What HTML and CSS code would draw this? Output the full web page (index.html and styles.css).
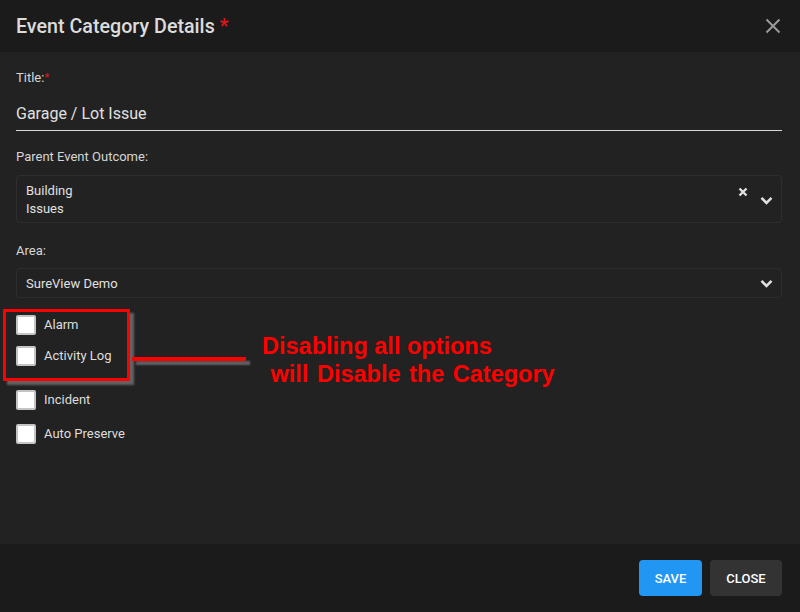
FILE: index.html
```html
<!DOCTYPE html>
<html lang="en">
<head>
  <meta charset="UTF-8" />
  <meta name="viewport" content="width=device-width, initial-scale=1.0" />
  <title>Event Category Details</title>
  <link rel="stylesheet" href="styles.css">
</head>
<body>
  <div class="dialog">
    <div class="dialog-header">
      <div class="dialog-title">Event Category Details <span class="req">*</span></div>
      <button class="btn-x" aria-label="Close">
        <svg width="16" height="16" viewBox="0 0 16 16"><path d="M1.5 1.5 L14.5 14.5 M14.5 1.5 L1.5 14.5" stroke="#9a9a9a" stroke-width="2" fill="none"/></svg>
      </button>
    </div>

    <div class="dialog-body">
      <label class="field-label">Title:<span class="req">*</span></label>
      <div class="text-input">Garage / Lot Issue</div>

      <label class="field-label label-gap">Parent Event Outcome:</label>
      <div class="select select-tall">
        <div class="select-value">Building<br>Issues</div>
        <span class="select-clear">
          <svg width="10" height="10" viewBox="0 0 10 10"><path d="M1.5 1.5 L8.5 8.5 M8.5 1.5 L1.5 8.5" stroke="#e0e0e0" stroke-width="2.4" fill="none"/></svg>
        </span>
        <span class="select-arrow">
          <svg width="13" height="9" viewBox="0 0 13 9"><path d="M1.5 1.8 L6.5 6.8 L11.5 1.8" stroke="#e0e0e0" stroke-width="2.6" fill="none"/></svg>
        </span>
      </div>

      <label class="field-label label-gap-lg">Area:</label>
      <div class="select">
        <div class="select-value">SureView Demo</div>
        <span class="select-arrow">
          <svg width="13" height="9" viewBox="0 0 13 9"><path d="M1.5 1.8 L6.5 6.8 L11.5 1.8" stroke="#e0e0e0" stroke-width="2.6" fill="none"/></svg>
        </span>
      </div>

      <div class="checks">
        <label class="check"><span class="box"></span>Alarm</label>
        <label class="check"><span class="box"></span>Activity Log</label>
        <label class="check check-incident"><span class="box"></span>Incident</label>
        <label class="check check-auto"><span class="box"></span>Auto Preserve</label>
      </div>
    </div>

    <div class="dialog-footer">
      <button class="btn btn-save">SAVE</button>
      <button class="btn btn-close">CLOSE</button>
    </div>

    <!-- annotation drawn over the screenshot -->
    <div class="note-box"></div>
    <div class="note-line"></div>
    <div class="note-text">Disabling all options
<span class="note-wide"> will Disable the Category</span></div>
  </div>
</body>
</html>
```

FILE: styles.css
```css
body {
  margin: 0;
  font-family: Roboto, "Liberation Sans", Arial, sans-serif;
  background: #1b1b1b;
  color: #dedede;
}
.dialog {
  position: relative;
  display: flex;
  flex-direction: column;
  width: 800px;
  height: 612px;
  overflow: hidden;
}
.dialog-header {
  height: 52px;
  flex: none;
  display: flex;
  align-items: center;
  justify-content: space-between;
  padding: 0 18px 0 16px;
  background: #1b1b1b;
}
.dialog-title {
  font-size: 19.7px;
  font-weight: 500;
  color: #dcdcdc;
}
.req {
  color: #e8141b;
}
.btn-x {
  background: none;
  border: none;
  padding: 0;
  margin-right: 1px;
  display: flex;
  cursor: pointer;
}
.dialog-body {
  flex: 1;
  display: flex;
  flex-direction: column;
  padding: 18px 18px 0 16px;
  background: #222222;
}
.field-label {
  display: block;
  font-size: 13px;
  line-height: 16px;
  color: #d6d6d6;
}
.field-label .req {
  font-size: 11px;
  vertical-align: top;
}
.text-input {
  margin-top: 18px;
  font-size: 16px;
  line-height: 20px;
  padding-bottom: 6px;
  border-bottom: 1px solid #d8d8d8;
  color: #e0e0e0;
}
.label-gap {
  margin-top: 18px;
}
.label-gap-lg {
  margin-top: 20px;
}
.select {
  margin-top: 9px;
  display: flex;
  align-items: center;
  height: 30px;
  box-sizing: border-box;
  padding: 1px 8px 0 9px;
  border: 1px solid #2e2e2e;
  border-radius: 4px;
}
.select-tall {
  margin-top: 10px;
  height: 48px;
  align-items: flex-start;
  padding-top: 6px;
}
.select-value {
  flex: 1;
  font-size: 13px;
  line-height: 18px;
  color: #e0e0e0;
}
.select-clear {
  display: flex;
  margin: 5px 12px 0 0;
}
.select-arrow {
  display: flex;
}
.select-tall .select-arrow {
  margin-top: 14px;
}
.checks {
  margin-top: 17px;
  display: flex;
  flex-direction: column;
  gap: 11px;
}
.check {
  display: flex;
  align-items: center;
  gap: 8px;
  font-size: 13px;
  line-height: 20px;
  color: #dedede;
}
.check-incident {
  margin-top: 13px;
}
.check-auto {
  margin-top: 3px;
}
.box {
  width: 20px;
  height: 20px;
  box-sizing: border-box;
  background: #fff;
  border: 2px solid #c4c4c4;
  border-radius: 2px;
}
.dialog-footer {
  height: 68px;
  flex: none;
  display: flex;
  align-items: center;
  justify-content: flex-end;
  gap: 8px;
  padding: 0 18px 0 16px;
  background: #1b1b1b;
}
.btn {
  height: 36px;
  border: none;
  border-radius: 4px;
  font-family: Roboto, "Liberation Sans", Arial, sans-serif;
  font-size: 13px;
  font-weight: 500;
  color: #fff;
  cursor: pointer;
}
.btn-save {
  width: 63px;
  background: #2196f3;
}
.btn-close {
  width: 72px;
  background: #333333;
}
.note-box {
  position: absolute;
  left: 3px;
  top: 309px;
  width: 121px;
  height: 66px;
  border: 3px solid #ff0000;
  box-shadow: 4px 4px 2px rgba(120, 120, 120, 0.75);
}
.note-line {
  position: absolute;
  left: 132px;
  top: 357px;
  width: 114px;
  height: 4px;
  background: #ff0000;
  box-shadow: 4px 4px 2px rgba(120, 120, 120, 0.75);
}
.note-text {
  position: absolute;
  left: 262px;
  top: 332px;
  font-family: "Liberation Sans", Arial, sans-serif;
  font-size: 23.5px;
  font-weight: bold;
  line-height: 28px;
  color: #ff0000;
  white-space: pre;
}
.note-wide {
  word-spacing: 2px;
}
```
